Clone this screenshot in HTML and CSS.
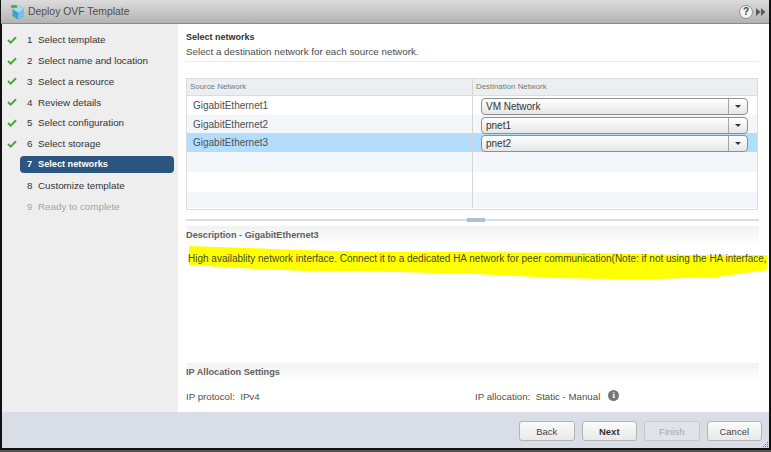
FILE: index.html
```html
<!DOCTYPE html>
<html lang="en">
<head>
<meta charset="utf-8">
<title>Deploy OVF Template</title>
<link rel="stylesheet" href="styles.css">
</head>
<body>
<div class="window">
  <header class="titlebar">
    <svg class="logo" width="15" height="16" viewBox="0 0 15 16">
      <path d="M8 2 14 5V12L8 15.5 2.5 12V5Z" fill="#3f9fc9"/>
      <path d="M8 8.5 14 5V12L8 15.5Z" fill="#6fc3e4"/>
      <path d="M8 2 14 5 8 8.5 2.5 5Z" fill="#a5dcef"/>
      <rect x="1" y="1" width="6" height="3" rx="1" fill="#4caf50"/>
    </svg>
    <span class="title">Deploy OVF Template</span>
    <span class="spacer"></span>
    <span class="help">?</span>
    <svg class="more" width="10" height="10" viewBox="0 0 10 10"><path d="M0 1 4.5 5 0 9ZM5 1 9.5 5 5 9Z" fill="#5a5a5a"/></svg>
  </header>
  <div class="content">
    <nav class="steps">
      <div class="step"><svg class="check" viewBox="0 0 10 8"><path d="M1 4 3.7 6.6 9 1.2" fill="none" stroke="#45a934" stroke-width="2"/></svg><span class="num">1</span><span>Select template</span></div>
      <div class="step"><svg class="check" viewBox="0 0 10 8"><path d="M1 4 3.7 6.6 9 1.2" fill="none" stroke="#45a934" stroke-width="2"/></svg><span class="num">2</span><span>Select name and location</span></div>
      <div class="step"><svg class="check" viewBox="0 0 10 8"><path d="M1 4 3.7 6.6 9 1.2" fill="none" stroke="#45a934" stroke-width="2"/></svg><span class="num">3</span><span>Select a resource</span></div>
      <div class="step"><svg class="check" viewBox="0 0 10 8"><path d="M1 4 3.7 6.6 9 1.2" fill="none" stroke="#45a934" stroke-width="2"/></svg><span class="num">4</span><span>Review details</span></div>
      <div class="step"><svg class="check" viewBox="0 0 10 8"><path d="M1 4 3.7 6.6 9 1.2" fill="none" stroke="#45a934" stroke-width="2"/></svg><span class="num">5</span><span>Select configuration</span></div>
      <div class="step"><svg class="check" viewBox="0 0 10 8"><path d="M1 4 3.7 6.6 9 1.2" fill="none" stroke="#45a934" stroke-width="2"/></svg><span class="num">6</span><span>Select storage</span></div>
      <div class="step active"><span class="num">7</span><span>Select networks</span></div>
      <div class="step plain"><span class="num">8</span><span>Customize template</span></div>
      <div class="step plain disabled"><span class="num">9</span><span>Ready to complete</span></div>
    </nav>
    <main class="main">
      <h1 class="heading">Select networks</h1>
      <p class="sub">Select a destination network for each source network.</p>
      <div class="rule"></div>
      <div class="table">
        <div class="row head"><div class="c1">Source Network</div><div class="c2">Destination Network</div></div>
        <div class="row"><div class="c1">GigabitEthernet1</div><div class="c2"><div class="select"><span class="val">VM Network</span><span class="arrow"></span></div></div></div>
        <div class="row alt"><div class="c1">GigabitEthernet2</div><div class="c2"><div class="select"><span class="val">pnet1</span><span class="arrow"></span></div></div></div>
        <div class="row sel"><div class="c1">GigabitEthernet3</div><div class="c2"><div class="select"><span class="val">pnet2</span><span class="arrow"></span></div></div></div>
        <div class="row blank"><div class="c1"></div><div class="c2"></div></div>
        <div class="row blank white"><div class="c1"></div><div class="c2"></div></div>
        <div class="row blank last"><div class="c1"></div><div class="c2"></div></div>
      </div>
      <div class="splitter"><span class="handle"></span></div>
      <div class="section-head">Description - GigabitEthernet3</div>
      <div class="desc">
        <svg class="marker" width="590" height="40" viewBox="0 0 590 40">
          <polygon fill="#ffff00" points="3,0 60,2 115,4 190,6 285,6 400,7 500,9 581,9 581,24 530,31 470,33 430,33 370,32 290,28 210,26 120,25 70,23 3,19"/>
        </svg>
        <p class="desc-text">High availablity network interface. Connect it to a dedicated HA network for peer communication(Note: if not using the HA interface,</p>
      </div>
      <div class="section-head ip">IP Allocation Settings</div>
      <div class="ip-row">
        <span class="ip-left">IP protocol:&nbsp; IPv4</span>
        <span class="ip-right">IP allocation:&nbsp; Static - Manual<span class="info">i</span></span>
      </div>
    </main>
  </div>
  <footer class="footer">
    <button class="btn">Back</button>
    <button class="btn primary">Next</button>
    <button class="btn off">Finish</button>
    <button class="btn">Cancel</button>
    <svg class="grip" width="7" height="7" viewBox="0 0 7 7"><path d="M5 1h1v1H5zM3 3h1v1H3zM5 3h1v1H5zM1 5h1v1H1zM3 5h1v1H3zM5 5h1v1H5z" fill="#777"/></svg>
  </footer>
</div>
</body>
</html>
```

FILE: styles.css
```css
* { box-sizing: border-box; }
html, body { margin: 0; height: 100%; }
body {
  width: 771px;
  height: 452px;
  overflow: hidden;
  background: #555;
  font-family: "Liberation Sans", Arial, sans-serif;
  font-size: 10px;
  color: #4a4a4a;
}
.window {
  width: 771px;
  height: 450px;
  display: flex;
  flex-direction: column;
  background: #fff;
  border-left: 2px solid #111;
  border-right: 2px solid #111;
  border-bottom: 2px solid #111;
  position: relative;
}
.titlebar {
  height: 24px;
  flex: none;
  display: flex;
  align-items: center;
  padding: 0 3px 0 9px;
  margin-left: -1px;
  background: linear-gradient(#dcdcdc, #b3b3b3);
  border-bottom: 1px solid #8a8a8a;
}
.logo { flex: none; }
.title { margin-left: 3px; font-size: 10.4px; color: #4d4d4d; }
.spacer { flex: 1; }
.help {
  width: 14px; height: 14px;
  border-radius: 50%;
  background: #f4f4f4;
  border: 1px solid #8d8d8d;
  font-size: 10px;
  font-weight: 700;
  line-height: 12px;
  text-align: center;
  color: #444;
}
.more { margin: 0 0 0 3px; }
.content { flex: 1; display: flex; min-height: 0; }
.steps {
  width: 176px;
  flex: none;
  background: #eeeeee;
  padding: 5.4px 4px 0 5px;
  display: flex;
  flex-direction: column;
  font-size: 9.8px;
  color: #333;
}
.step { height: 20.75px; display: flex; align-items: center; white-space: nowrap; }
.check { width: 10px; height: 8px; flex: none; margin-right: 10px; }
.num { width: 11px; flex: none; }
.step.active {
  margin-left: 13px;
  padding-left: 7px;
  height: 17px;
  margin-top: 2px;
  margin-bottom: 2px;
  background: #2c5580;
  border-radius: 4px;
  color: #fff;
  font-weight: 700;
  font-size: 9.2px;
}
.step.plain { padding-left: 20px; }
.step.disabled { color: #a4a4a4; }
.main { flex: 1; min-width: 0; padding: 7px 0 0 8px; overflow: hidden; background: #fff; }
.heading { margin: 0; font-size: 9px; line-height: 12px; font-weight: 700; color: #333; }
.sub { margin: 3px 0 0; font-size: 9.8px; line-height: 11px; color: #4a4a4a; white-space: nowrap; }
.rule { margin-top: 4px; height: 1px; background: #ececec; width: 573px; }
.table { margin-top: 16px; width: 572px; height: 132px; border: 1px solid #dcdcdc; }
.row { display: flex; height: 18.5px; font-size: 10px; background: #fff; }
.c1 { width: 285px; flex: none; padding-left: 6px; line-height: 19px; color: #4f4f4f; }
.c2 { flex: 1; border-left: 1px solid #d5d5d5; padding-left: 8px; }
.row.head { height: 17px; background: #eceff1; border-bottom: 1px solid #dcdcdc; font-size: 7.9px; }
.row.head .c1 { padding-left: 3px; line-height: 16px; color: #777; }
.row.head .c2 { padding-left: 3px; line-height: 16px; color: #777; }
.row.alt, .row.blank { background: #f3f6fb; }
.row.blank { height: 20px; }
.row.blank.white { background: #fff; }
.row.blank.last { height: 16px; }
.row.sel { background: #b3ddfd; }
.select {
  width: 267px;
  height: 17px;
  margin-top: 2px;
  display: flex;
  align-items: center;
  background: linear-gradient(#ffffff, #e6e6e6);
  border: 1px solid #8f8f8f;
  border-radius: 4px;
  color: #333;
}
.val { flex: 1; padding-left: 4px; line-height: 15px; border-right: 1px solid #a5a5a5; }
.arrow { width: 18px; display: flex; justify-content: center; }
.arrow::before {
  content: "";
  border-left: 3px solid transparent;
  border-right: 3px solid transparent;
  border-top: 3px solid #333;
}
.splitter {
  margin-top: 9px;
  width: 573px;
  height: 2px;
  background: #d6dfe8;
  display: flex;
  justify-content: center;
}
.handle { width: 18px; height: 4px; background: #aebfd6; margin-top: -1px; margin-left: 6px; }
.section-head {
  margin-top: 5px;
  width: 573px;
  height: 19px;
  line-height: 18px;
  font-size: 9.2px;
  font-weight: 700;
  color: #5f5f5f;
  background: linear-gradient(#f2f2f2, #ffffff);
}
.desc { position: relative; height: 118px; overflow: hidden; }
.marker { position: absolute; left: 0; top: 1px; }
.desc-text {
  position: relative;
  margin: 0;
  padding: 8px 0 0 2px;
  font-size: 10px;
  line-height: 11px;
  white-space: nowrap;
  color: #4a4a2a;
}
.section-head.ip { margin-top: 0; }
.ip-row { display: flex; margin-top: 9px; font-size: 9.7px; line-height: 11px; color: #4f4f4f; }
.ip-left { width: 289px; }
.ip-right { display: flex; align-items: center; white-space: pre; }
.info {
  width: 11px; height: 11px;
  margin-left: 8px;
  margin-top: -3px;
  border-radius: 50%;
  background: #777;
  color: #fff;
  font: 700 9px/11px "Liberation Serif", serif;
  text-align: center;
}
.footer {
  height: 36px;
  flex: none;
  display: flex;
  align-items: flex-start;
  justify-content: flex-end;
  gap: 7px;
  padding: 9px 7px 0 0;
  background: #d9dee6;
  position: relative;
}
.btn {
  width: 55.5px;
  height: 20px;
  padding: 0;
  border: 1px solid #b4b4b4;
  border-radius: 3px;
  background: linear-gradient(#fbfbfb, #e9e9e9);
  font: 9.5px "Liberation Sans", Arial, sans-serif;
  color: #444;
}
.btn.primary { font-weight: 700; color: #333; }
.btn.off { background: #e0e3e8; color: #a8a8a8; border-color: #c6c9ce; }
.grip { position: absolute; right: 0; bottom: 0; }
```
